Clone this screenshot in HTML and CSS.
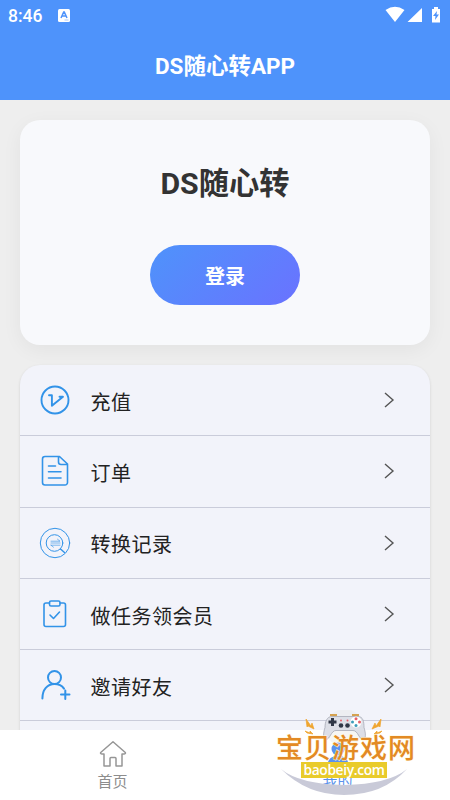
FILE: index.html
```html
<!DOCTYPE html>
<html lang="zh-CN">
<head>
<meta charset="utf-8">
<meta name="viewport" content="width=device-width, initial-scale=1">
<title>DS随心转APP</title>
<link rel="stylesheet" href="styles.css">
</head>
<body>
<div class="app">
  <header class="header">
    <div class="status">
      <span class="clock">8:46</span>
      <svg class="ime" width="12" height="13" viewBox="0 0 12 13"><rect width="12" height="13" rx="1.5" fill="#fff"/><path d="M3 9 5.700 3h.6L9 9M4 7h4" fill="none" stroke="#4e93fb" stroke-width="1.500"/><path d="M6.500 11h4" stroke="#a9caff"/></svg>
      <svg class="signals" width="58" height="18" viewBox="0 0 58 18" fill="#fff"><path d="M.5 4Q10 -2.500 19.500 4L10 16ZM22.500 16 37 2v14ZM47 3h2V1h4v2h2v13.500H47Z"/><path d="m52 5-4 5h2.500L50 14l4-5.500h-2.500Z" fill="#4e93fb"/></svg>
    </div>
    <h1 class="title">DS随心转APP</h1>
  </header>
  <main class="content">
    <section class="card">
      <h2 class="brand">DS随心转</h2>
      <button class="login">登录</button>
    </section>
    <ul class="menu">
      <li class="row">
        <svg class="icon" viewBox="0 0 32 32" stroke-width="1.900"><circle cx="16" cy="16" r="13.500"/><path d="M10 11.200h2.900v10.500L24 12.800H20.500"/></svg>
        <span class="label">充值</span><svg class="arrow" viewBox="0 0 12 16"><path d="m2 1 8 7-8 7"/></svg>
      </li>
      <li class="row">
        <svg class="icon" viewBox="0 0 32 32" stroke-width="1.600"><path d="M6 1.500h14.500l8 7.500v18.500a2.500 2.500 0 0 1-2.500 2.500H6A2.500 2.500 0 0 1 3.500 27.500V4A2.500 2.500 0 0 1 6 1.500ZM19.500 1.500V7a2.500 2.500 0 0 0 2.500 2.500h6.500M9.500 11h7M9.500 16.700h12.500M9.500 23h12.500"/></svg>
        <span class="label">订单</span><svg class="arrow" viewBox="0 0 12 16"><path d="m2 1 8 7-8 7"/></svg>
      </li>
      <li class="row">
        <svg class="icon" viewBox="0 0 32 32" stroke-width="1"><circle cx="16" cy="16" r="14.700"/><circle cx="15.500" cy="16" r="8.300"/><path d="m21.500 22 4 3.600" stroke-width="1.400"/><path d="M12 14.200h9l-2.500-2M21 16H12M12 18.200h9M12 18.200l2.500 2" stroke-width=".8" opacity=".8"/></svg>
        <span class="label">转换记录</span><svg class="arrow" viewBox="0 0 12 16"><path d="m2 1 8 7-8 7"/></svg>
      </li>
      <li class="row">
        <svg class="icon" viewBox="0 0 32 32" stroke-width="1.600"><path d="M10.500 5H7A2 2 0 0 0 5 7v19.500A2 2 0 0 0 7 28.500h17.500a2 2 0 0 0 2-2V7a2 2 0 0 0-2-2H21"/><rect x="10.500" y="3" width="10.500" height="5" rx="1.500"/><path d="m11 17 3.500 3.500 6-6.500"/></svg>
        <span class="label">做任务领会员</span><svg class="arrow" viewBox="0 0 12 16"><path d="m2 1 8 7-8 7"/></svg>
      </li>
      <li class="row">
        <svg class="icon" viewBox="0 0 32 32" stroke-width="2"><circle cx="15.500" cy="8.500" r="6.500"/><path d="M3.400 29.500c0-9 5-14.500 12-14.500 4.200 0 7.600 1.700 9.600 4.600M22 25.500h8.500M26.300 21.500v8.500"/></svg>
        <span class="label">邀请好友</span><svg class="arrow" viewBox="0 0 12 16"><path d="m2 1 8 7-8 7"/></svg>
      </li>
      <li class="row"></li>
    </ul>
  </main>
  <nav class="tabs">
    <a class="tab">
      <svg class="tab-icon" viewBox="0 0 28 28"><path d="M14 1.800 1.700 12.500c-.5.900.2 1.500 1.300 1.500h2v12h6v-7.500a1 1 0 0 1 1-1h4a1 1 0 0 1 1 1V26h6V14h2c1.100 0 1.800-.6 1.300-1.500Z" fill="none" stroke="#969696" stroke-width="1.500" stroke-linejoin="round"/></svg>
      <span>首页</span>
    </a>
    <a class="tab active">
      <svg class="tab-icon" viewBox="0 0 28 28"><circle cx="14" cy="9" r="6.500" fill="#5a91ed"/><path d="M4 24q0-8 10-8t10 8Z" fill="#5a91ed"/></svg>
      <span>我的</span>
    </a>
  </nav>
  <div class="watermark">
    <svg class="emblem" width="150" height="90" viewBox="0 0 150 90">
      <circle cx="71.500" cy="18" r="19" fill="#e6e6df" opacity=".35"/>
      <path d="M8 59Q26 74 71 75 116 74 134 59 110 85 71 85 34 85 8 59Z" fill="#c9cad8"/>
      <path d="M57 5h7M79 5h7" stroke="#d5a250" stroke-width="2"/>
      <path d="M59 6.500h26c5 0 6 5 6 11 2 6 2 12-1 12-4 0-5-9-10-9H63c-5 0-6 9-10 9-3 0-3-6-1-12 0-6 2-11 7-11Z" fill="#dddfe7" stroke="#9da1ae" stroke-width=".7"/>
      <path d="M59.500 8v8M55.500 12h8" stroke="#303746" stroke-width="3"/>
      <circle cx="68" cy="15.500" r="2.300" fill="#303746"/><circle cx="74.500" cy="15.500" r="2.300" fill="#303746"/>
      <circle cx="83" cy="12" r="5.500" fill="#fff"/><g fill="#e7606a"><circle cx="83" cy="8.700" r="1.500"/><circle cx="86.500" cy="12" r="1.500"/><circle cx="68" cy="10.500" r="1"/><circle cx="74.500" cy="10.500" r="1"/></g><g fill="#3d9dba"><circle cx="79.500" cy="12" r="1.500"/><circle cx="83" cy="15.500" r="1.500"/></g>
      <path d="m33 9 5 7 1-3 2 6-6-3-1 1ZM108 9l-5 7-1-3-3 6 7-3 1 1ZM32 21l5 2v-2l3 3-6-1ZM109 21l-5 2v-2l-3 3 6-1Z" fill="#efa52f" stroke="#efa52f" stroke-width=".7"/>
    </svg>
    <div class="wm-name">宝贝游戏网</div>
    <div class="wm-url">baobeiy.com</div>
  </div>
</div>
</body>
</html>
```
FILE: styles.css
```css
* { box-sizing: border-box; }
body { margin: 0; font-family: Roboto, "Noto Sans CJK SC", sans-serif; }
.app { position: relative; display: flex; flex-direction: column; height: 800px; overflow: hidden; background: #eee; }
.header { flex: none; height: 100px; background: #4e93fb; color: #fff; }
.status { display: flex; align-items: center; height: 32px; padding: 0 8px; }
.clock { width: 50px; font-size: 17.500px; line-height: 32px; font-weight: 500; }
.ime { margin-bottom: 2px; }
.signals { margin: 0 -1px 2px auto; }
.title { margin: 0; padding-top: 17px; font-size: 22.500px; line-height: 34px; font-weight: 700; text-align: center; }
.content { flex: 1; min-height: 0; padding: 20px 20px 0; overflow: hidden; }
.card { display: flex; flex-direction: column; align-items: center; height: 225px; padding-top: 41px; border-radius: 20px; background: #f8f9fc; box-shadow: 0 5px 20px rgba(0, 0, 0, .05); }
.brand { margin: 0; font-size: 30.300px; line-height: 46px; font-weight: 700; color: #333; }
.login { width: 150px; height: 60px; margin-top: 38px; padding: 4px 0 0; border: 0; border-radius: 30px; background: linear-gradient(135deg, #4e93fb, #6a72ff); color: #fff; font: 700 20px/56px Roboto, "Noto Sans CJK SC", sans-serif; }
.menu { list-style: none; margin: 20px 0 0; padding: 0; border-radius: 20px; background: #f2f3fa; box-shadow: 0 1px 3px rgba(0, 0, 0, .12); overflow: hidden; }
.row { display: flex; align-items: center; height: 71.300px; padding: 0 35px 0 19px; border-bottom: 1.500px solid #caccda; }
.icon { width: 32px; height: 32px; fill: none; stroke: #3293e8; stroke-linecap: round; stroke-linejoin: round; }
.label { flex: 1; margin-left: 19.500px; padding-top: 5px; font-size: 20px; line-height: 30px; letter-spacing: .5px; color: #222; }
.arrow { width: 12px; height: 16px; fill: none; stroke: #555; stroke-width: 1.400; }
.tabs { flex: none; display: flex; height: 70px; background: #fff; }
.tab { flex: 1; display: flex; flex-direction: column; align-items: center; padding-top: 10px; font-size: 15px; line-height: 22px; color: #8d8d8d; }
.tab span { margin-top: 3px; }
.tab-icon { width: 28px; height: 28px; }
.active { color: #5b93ec; }
.watermark { position: absolute; left: 273px; top: 710px; width: 150px; height: 90px; }
.emblem { position: absolute; left: 0; top: 0; }
.wm-name { position: absolute; left: 3px; top: 20px; font-size: 27px; line-height: 38px; letter-spacing: 1px; font-weight: 500; color: #e38a24; white-space: nowrap; -webkit-text-stroke: 1px #fff8dc; paint-order: stroke fill; }
.wm-url { position: absolute; left: 28px; top: 52px; width: 86px; height: 16px; background: #e9cb2b; color: #fff; font: 600 13.800px/15px "Open Sans", sans-serif; letter-spacing: -.35px; text-align: center; }
```
